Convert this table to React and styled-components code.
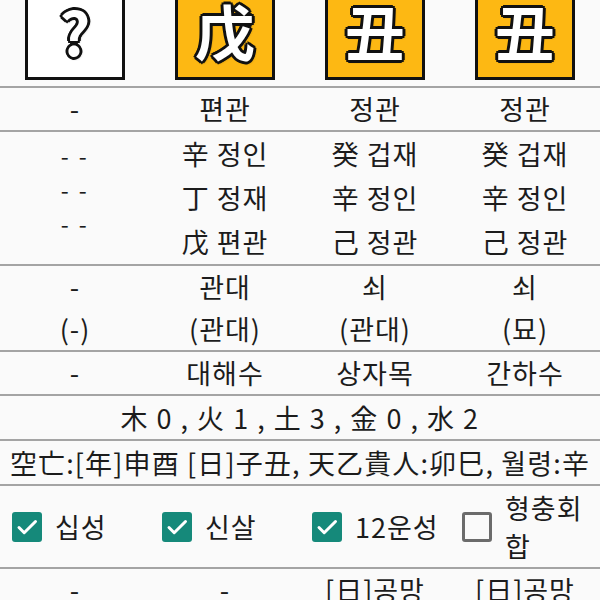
import React from "react";
import styled, { createGlobalStyle } from "styled-components";

const GlobalStyle = createGlobalStyle`
  body {
    margin: 0;
    background-color: #fafafa;
    color: #1c1c1c;
    font-family: "Noto Sans CJK KR", "Noto Sans", sans-serif;
    overflow: hidden;
  }
`;

const pillars = [
  { glyph: "?", bg: "#ffffff", ten: "-", hidden: ["- -", "- -", "- -"], stage: ["-", "(-)"], sound: "-" },
  { glyph: "戊", bg: "#fdb813", ten: "편관", hidden: ["辛 정인", "丁 정재", "戊 편관"], stage: ["관대", "(관대)"], sound: "대해수" },
  { glyph: "丑", bg: "#fdb813", ten: "정관", hidden: ["癸 겁재", "辛 정인", "己 정관"], stage: ["쇠", "(관대)"], sound: "상자목" },
  { glyph: "丑", bg: "#fdb813", ten: "정관", hidden: ["癸 겁재", "辛 정인", "己 정관"], stage: ["쇠", "(묘)"], sound: "간하수" },
];

const options = [
  { label: "십성", checked: true },
  { label: "신살", checked: true },
  { label: "12운성", checked: true },
  { label: "형충회합", checked: false },
];

const bottom = ["-", "-", "[日]공망", "[日]공망"];

const App = () => {
  return (
    <>
      <GlobalStyle />
      <Page>
        <Row>
          {pillars.map((p, i) => (
            <TileCell key={i}>
              <Tile $bg={p.bg}>{p.glyph}</Tile>
            </TileCell>
          ))}
        </Row>
        <Row>
          {pillars.map((p, i) => (
            <Cell key={i} $lh={42}>{p.ten}</Cell>
          ))}
        </Row>
        <Row>
          {pillars.map((p, i) =>
            i === 0 ? (
              <DashCell key={i}>
                {p.hidden.map((h, j) => (
                  <div key={j}>{h}</div>
                ))}
              </DashCell>
            ) : (
              <Cell key={i} $lh={44}>
                {p.hidden.map((h, j) => (
                  <div key={j}>{h}</div>
                ))}
              </Cell>
            )
          )}
        </Row>
        <Row>
          {pillars.map((p, i) => (
            <Cell key={i} $lh={42}>
              {p.stage.map((s, j) => (
                <div key={j}>{s}</div>
              ))}
            </Cell>
          ))}
        </Row>
        <Row>
          {pillars.map((p, i) => (
            <Cell key={i} $lh={42}>{p.sound}</Cell>
          ))}
        </Row>
        <FullRow $ls={1.5}>木 0 , 火 1 , 土 3 , 金 0 , 水 2</FullRow>
        <FullRow $ls={1.15}>空亡:[年]申酉 [日]子丑, 天乙貴人:卯巳, 월령:辛</FullRow>
        <CheckRow>
          {options.map((o, i) => (
            <CheckItem key={i}>
              <Box $checked={o.checked}>
                {o.checked && (
                  <svg width="24" height="24" viewBox="0 0 24 24">
                    <path d="M4 12.5l5.2 5.2L20.5 6.5" fill="none" stroke="#fff" strokeWidth="3" strokeLinecap="round" strokeLinejoin="round" />
                  </svg>
                )}
              </Box>
              <CheckLabel>{o.label}</CheckLabel>
            </CheckItem>
          ))}
        </CheckRow>
        <Row>
          {bottom.map((b, i) => (
            <Cell key={i} $lh={42}>{b}</Cell>
          ))}
        </Row>
      </Page>
    </>
  );
};

const Page = styled.div`
  width: 600px;
  margin-top: -14px;
`;

const Row = styled.div`
  display: grid;
  grid-template-columns: repeat(4, 150px);
  border-bottom: 2px solid #a4a4a4;
`;

const TileCell = styled.div`
  display: flex;
  justify-content: center;
  padding-bottom: 6px;
`;

const Tile = styled.div`
  width: 100px;
  height: 94px;
  box-sizing: border-box;
  border: 3px solid #111;
  background-color: ${(p) => p.$bg};
  display: flex;
  align-items: center;
  justify-content: center;
  padding-bottom: 6px;
  font-size: 60px;
  line-height: 1;
  font-weight: 700;
  color: #fff;
  text-shadow:
    -2px -2px 0 #111, 2px -2px 0 #111, -2px 2px 0 #111, 2px 2px 0 #111,
    0 -3px 0 #111, 0 3px 0 #111, -3px 0 0 #111, 3px 0 0 #111,
    1px 1px 3px #000;
`;

const Cell = styled.div`
  text-align: center;
  font-size: 27px;
  line-height: ${(p) => p.$lh}px;
  white-space: nowrap;
  letter-spacing: 1px;
`;

const DashCell = styled.div`
  text-align: center;
  font-size: 23px;
  line-height: 34px;
  letter-spacing: 2.5px;
  padding-top: 6px;
  white-space: nowrap;
`;

const FullRow = styled.div`
  text-align: center;
  font-size: 27px;
  line-height: 43px;
  letter-spacing: ${(p) => p.$ls}px;
  white-space: nowrap;
  border-bottom: 2px solid #a4a4a4;
  overflow: hidden;
`;

const CheckRow = styled.div`
  display: grid;
  grid-template-columns: repeat(4, 150px);
  height: 81px;
  border-bottom: 2px solid #a4a4a4;
`;

const CheckItem = styled.div`
  display: flex;
  align-items: center;
  gap: 13px;
  padding-left: 12px;
`;

const Box = styled.div`
  flex: none;
  width: 30px;
  height: 30px;
  box-sizing: border-box;
  border-radius: 3px;
  display: flex;
  align-items: center;
  justify-content: center;
  background-color: ${(p) => (p.$checked ? "#15897a" : "transparent")};
  border: ${(p) => (p.$checked ? "none" : "3px solid #6b6b6b")};
`;

const CheckLabel = styled.span`
  font-size: 27px;
  line-height: 38px;
  letter-spacing: 1px;
`;

export default App;
